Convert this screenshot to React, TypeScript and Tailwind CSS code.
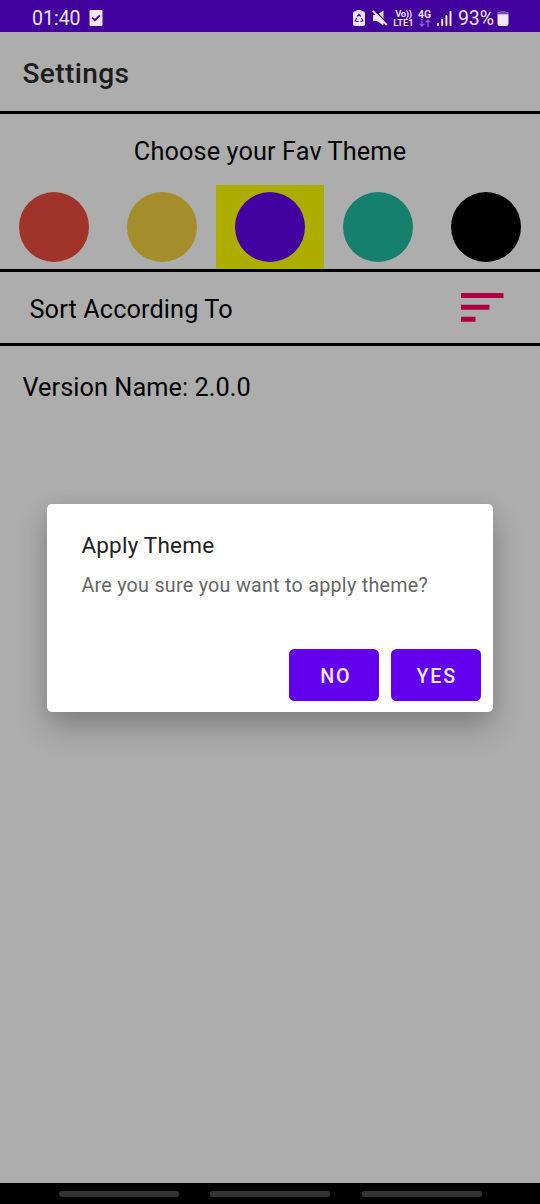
import React from "react";

const themes = [
  { name: "Red", dot: "bg-[#a0342b]", cell: "" },
  { name: "Yellow", dot: "bg-[#a58d2c]", cell: "" },
  { name: "Purple", dot: "bg-[#4300a0]", cell: "bg-[#adad00]" },
  { name: "Green", dot: "bg-[#15806b]", cell: "" },
  { name: "Black", dot: "bg-black", cell: "" },
];

function StatusBar() {
  return (
    <header className="flex h-8 items-center bg-[#42009c] pl-8 pr-[31px] pt-1 text-[#f1e6fc]">
      <span className="w-[57px] pt-[2px] text-[19.5px] leading-7">01:40</span>
      <svg width="14" height="16" viewBox="0 0 14 16">
        <rect x="0.5" width="13" height="16" rx="1" fill="currentColor" />
        <path d="M3.2 7.6 6 10.2 10.8 5.4" fill="none" stroke="#42009c" strokeWidth="1.8" />
      </svg>
      <div className="ml-auto flex items-center">
        <svg width="12" height="16" viewBox="0 0 12 16" className="mr-[7px]">
          <path d="M3.5 0h5v1.3H10a2 2 0 0 1 2 2V14a2 2 0 0 1-2 2H2a2 2 0 0 1-2-2V3.3a2 2 0 0 1 2-2h1.5z" fill="currentColor" />
          <path d="M4.2 6.5 6 4.4l1.8 2.1M8.5 8l1.3 2.8-2.3.7M5.4 11.5l-3.2-.4L3.500 8" fill="none" stroke="#42009c" strokeWidth="1.2" />
        </svg>
        <svg width="16" height="16" viewBox="0 0 16 16" className="mr-[5px]">
          <path d="M1 5h4l6.500-4.500v15L5 11H1z" fill="currentColor" />
          <path d="M2.200 0 16 14" stroke="#42009c" strokeWidth="1.300" />
          <path d="M.8 1 14.800 15" stroke="currentColor" strokeWidth="1.900" />
        </svg>
        <div className="mr-[4px] flex h-[18px] w-[21px] flex-col items-center text-[9.5px] font-semibold leading-[9px] tracking-[-0.1px]">
          <span className="h-[9px] whitespace-nowrap tracking-[-0.4px]">Vo))</span>
          <span className="h-[9px] whitespace-nowrap">LTE1</span>
        </div>
        <div className="mr-[6px] flex w-[13px] flex-col items-center">
          <span className="text-[10.5px] font-semibold leading-[9px]">4G</span>
          <svg width="12" height="8" viewBox="0 0 12 8" fill="none" stroke="#9060cb" strokeWidth="1.3">
            <path d="M3 0v7M.6 4.600 3 7l2.400-2.400M9 8V1M6.600 3.400 9 1l2.400 2.400" />
          </svg>
        </div>
        <svg width="15" height="15" viewBox="0 0 15 15" fill="currentColor" className="mr-[6px]">
          <rect y="12" width="2" height="3" rx=".8" />
          <rect x="4.200" y="8" width="2" height="7" rx=".8" />
          <rect x="8.400" y="4" width="2" height="11" rx=".8" />
          <rect x="12.500" width="2" height="15" rx=".8" />
        </svg>
        <span className="w-[39px] whitespace-nowrap pt-[2px] text-[19.5px] leading-7 tracking-[-0.1px]">93%</span>
        <svg width="12" height="15" viewBox="0 0 12 15" fill="currentColor">
          <path d="M3.500 0h5v1H11.500v2.500H.5V1h3z" opacity=".35" />
          <path d="M.5 3.200h11V13a2 2 0 0 1-2 2h-7a2 2 0 0 1-2-2z" />
        </svg>
      </div>
    </header>
  );
}

function ConfirmDialog() {
  return (
    <section
      role="dialog"
      className="absolute left-[47.4px] top-[503.5px] flex h-[208.5px] w-[445.3px] flex-col rounded-[5px] bg-white pl-[34px] pr-[12px] pt-[26px] shadow-[0_16px_30px_rgba(0,0,0,0.22),0_3px_20px_rgba(0,0,0,0.08)]"
    >
      <h2 className="text-[22.5px] leading-[30px] tracking-[0.21px] text-[#212121]">Apply Theme</h2>
      <p className="mt-[13px] text-[19.7px] leading-[26px] tracking-[0.28px] text-[#666]">
        Are you sure you want to apply theme?
      </p>
      <div className="mb-[11px] mt-auto flex justify-end gap-[11.5px]">
        <button className="h-[52px] w-[90px] rounded-[5.5px] bg-[#6200ee] pl-[3px] pt-[3px] text-[19.7px] font-medium tracking-[1.76px] text-[#f3eaff]">NO</button>
        <button className="h-[52px] w-[90px] rounded-[5.5px] bg-[#6200ee] pl-[2px] pt-[3px] text-[19.7px] font-medium tracking-[1.76px] text-[#f3eaff]">YES</button>
      </div>
    </section>
  );
}

export default function App() {
  return (
    <main className="relative flex h-[1204px] w-[540px] flex-col overflow-hidden bg-[#adadad] font-['Roboto',sans-serif] text-black">
      <StatusBar />
      <div className="flex h-[82px] items-center border-b-3 border-black pl-[22.5px] pt-[5px]">
        <h1 className="text-[28.1px] font-medium leading-8 tracking-[0.35px] text-[#1c1c1c]">Settings</h1>
      </div>
      <section className="flex h-[158px] flex-col border-b-3 border-black">
        <h2 className="mt-[21px] text-center text-[25.3px] leading-[34px] tracking-[0.1px]">Choose your Fav Theme</h2>
        <div className="mt-auto grid h-[84px] grid-cols-5">
          {themes.map((theme) => (
            <button key={theme.name} aria-label={theme.name} className={`flex justify-center pt-[7px] ${theme.cell}`}>
              <span className={`size-[70.4px] rounded-full ${theme.dot}`} />
            </button>
          ))}
        </div>
      </section>
      <section className="flex h-[74px] items-center justify-between border-b-3 border-black pl-[29.5px] pr-9">
        <span className="pt-[4px] text-[25.3px] tracking-[0.1px]">Sort According To</span>
        <svg width="43" height="29" viewBox="0 0 43 29" fill="#ad0042">
          <path d="M0 0h42.500v5H0zM0 11.800h28.500v5H0zM0 23.700h14.500v5H0z" />
        </svg>
      </section>
      <p className="mt-[25px] pl-[22.5px] text-[25.3px] leading-[34px] tracking-[0.05px]">Version Name: 2.0.0</p>
      <nav className="mt-auto flex h-[21px] justify-center gap-[31.5px] bg-black pt-2">
        <span className="h-[6px] w-[120px] rounded-full bg-[#333]" />
        <span className="h-[6px] w-[120px] rounded-full bg-[#333]" />
        <span className="h-[6px] w-[120px] rounded-full bg-[#333]" />
      </nav>
      <ConfirmDialog />
    </main>
  );
}
